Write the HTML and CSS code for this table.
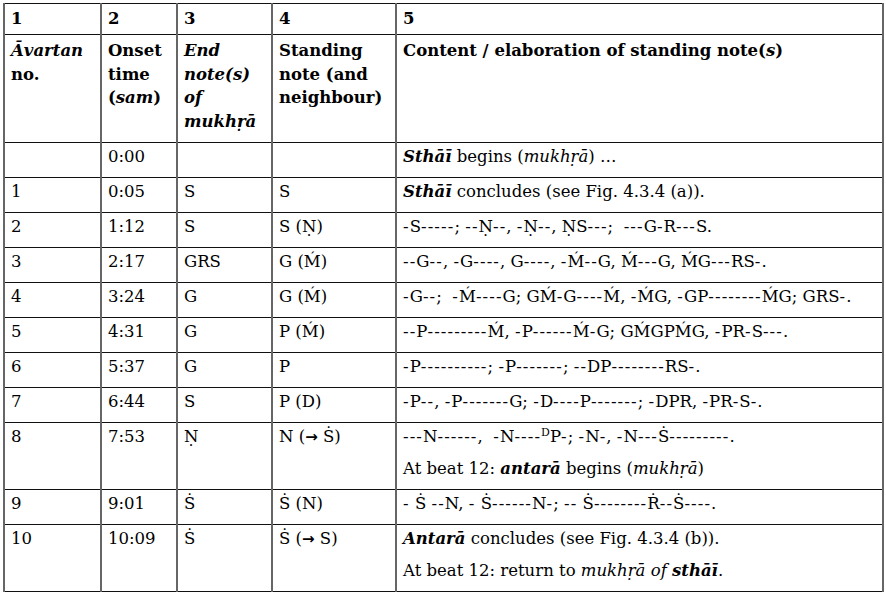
FILE: index.html
```html
<!DOCTYPE html>
<html lang="en">
<head>
<meta charset="utf-8">
<title>Ālāp table</title>
<link rel="stylesheet" href="styles.css">
</head>
<body>
<table class="grid">
  <colgroup>
    <col class="c1"><col class="c2"><col class="c3"><col class="c4"><col class="c5">
  </colgroup>
  <thead>
    <tr class="num">
      <th>1</th><th>2</th><th>3</th><th>4</th><th>5</th>
    </tr>
    <tr class="head">
      <th><i>Āvartan</i><br>no.</th>
      <th>Onset<br>time<br>(<i>sam</i>)</th>
      <th><i>End<br>note(s)<br>of<br>mukhṛā</i></th>
      <th>Standing<br>note (and<br>neighbour)</th>
      <th>Content / elaboration of standing note(<i>s</i>)</th>
    </tr>
  </thead>
  <tbody>
    <tr><td></td><td><p>0:00</p></td><td></td><td></td><td><p><b><i>Sthāī</i></b> begins (<i>mukhṛā</i>) …</p></td></tr>
    <tr><td><p>1</p></td><td><p>0:05</p></td><td><p>S</p></td><td><p>S</p></td><td><p><b><i>Sthāī</i></b> concludes (see Fig. 4.3.4 (a)).</p></td></tr>
    <tr><td><p>2</p></td><td><p>1:12</p></td><td><p>S</p></td><td><p>S (Ṇ)</p></td><td><p class="notes"><span class="d">-</span>S<span class="d">-----</span>; <span class="d">--</span>Ṇ<span class="d">--</span>, <span class="d">-</span>Ṇ<span class="d">--</span>, ṆS<span class="d">---</span>;&nbsp; <span class="d">---</span>G<span class="d">-</span>R<span class="d">---</span>S.</p></td></tr>
    <tr><td><p>3</p></td><td><p>2:17</p></td><td><p>GRS</p></td><td><p>G (Ḿ)</p></td><td><p class="notes"><span class="d">--</span>G<span class="d">--</span>, <span class="d">-</span>G<span class="d">----</span>, G<span class="d">----</span>, <span class="d">-</span>Ḿ<span class="d">--</span>G, Ḿ<span class="d">---</span>G, ḾG<span class="d">---</span>RS<span class="d">-</span>.</p></td></tr>
    <tr><td><p>4</p></td><td><p>3:24</p></td><td><p>G</p></td><td><p>G (Ḿ)</p></td><td><p class="notes"><span class="d">-</span>G<span class="d">--</span>;&nbsp; <span class="d">-</span>Ḿ<span class="d">----</span>G; GḾ<span class="d">-</span>G<span class="d">----</span>Ḿ, <span class="d">-</span>ḾG, <span class="d">-</span>GP<span class="d">--------</span>ḾG; GRS<span class="d">-</span>.</p></td></tr>
    <tr><td><p>5</p></td><td><p>4:31</p></td><td><p>G</p></td><td><p>P (Ḿ)</p></td><td><p class="notes"><span class="d">--</span>P<span class="d">---------</span>Ḿ, <span class="d">-</span>P<span class="d">------</span>Ḿ<span class="d">-</span>G; GḾGPḾG, <span class="d">-</span>PR<span class="d">-</span>S<span class="d">---</span>.</p></td></tr>
    <tr><td><p>6</p></td><td><p>5:37</p></td><td><p>G</p></td><td><p>P</p></td><td><p class="notes"><span class="d">-</span>P<span class="d">----------</span>; <span class="d">-</span>P<span class="d">-------</span>; <span class="d">--</span>DP<span class="d">--------</span>RS<span class="d">-</span>.</p></td></tr>
    <tr><td><p>7</p></td><td><p>6:44</p></td><td><p>S</p></td><td><p>P (D)</p></td><td><p class="notes"><span class="d">-</span>P<span class="d">--</span>, <span class="d">-</span>P<span class="d">-------</span>G; <span class="d">-</span>D<span class="d">----</span>P<span class="d">-------</span>; <span class="d">-</span>DPR, <span class="d">-</span>PR<span class="d">-</span>S<span class="d">-</span>.</p></td></tr>
    <tr><td><p>8</p></td><td><p>7:53</p></td><td><p>Ṇ</p></td><td><p>N (<span class="arr">→</span> Ṡ)</p></td><td><p class="notes"><span class="d">---</span>N<span class="d">------</span>,&nbsp; <span class="d">-</span>N<span class="d">----</span><sup class="grace">D</sup>P<span class="d">-</span>; <span class="d">-</span>N<span class="d">-</span>, <span class="d">-</span>N<span class="d">---</span>Ṡ<span class="d">---------</span>.</p><p>At beat 12: <b><i>antarā</i></b> begins (<i>mukhṛā</i>)</p></td></tr>
    <tr><td><p>9</p></td><td><p>9:01</p></td><td><p>Ṡ</p></td><td><p>Ṡ (N)</p></td><td><p class="notes"><span class="d">-</span> Ṡ <span class="d">--</span>N, <span class="d">-</span> Ṡ<span class="d">------</span>N<span class="d">-</span>; <span class="d">--</span> Ṡ<span class="d">--------</span>Ṙ<span class="d">--</span>Ṡ<span class="d">----</span>.</p></td></tr>
    <tr><td><p>10</p></td><td><p>10:09</p></td><td><p>Ṡ</p></td><td><p>Ṡ (<span class="arr">→</span> S)</p></td><td><p><b><i>Antarā</i></b> concludes (see Fig. 4.3.4 (b)).</p><p>At beat 12: return to <i>mukhṛā of</i> <b><i>sthāī</i></b>.</p></td></tr>
  </tbody>
</table>
</body>
</html>
```
FILE: styles.css
```css
html, body {
  margin: 0;
  background: #ffffff;
}
body {
  padding: 3px 0 0 3px;
  font-family: "DejaVu Serif", serif;
  font-size: 16.5px;
  color: #000;
}
.grid {
  border-collapse: collapse;
  table-layout: fixed;
  width: 879px;
}
.c1 { width: 97px; }
.c2 { width: 76px; }
.c3 { width: 95px; }
.c4 { width: 124px; }
.c5 { width: 487px; }

.grid th, .grid td {
  border-top: 1px solid #111;
  border-bottom: 1px solid #111;
  border-left: 2px solid #666;
  border-right: 2px solid #666;
  text-align: left;
  vertical-align: top;
  padding: 2px 4px 0 6px;
  line-height: 23.5px;
}
.grid th {
  font-weight: bold;
}
.num th {
  padding-top: 3px;
  padding-bottom: 3px;
  height: 24px;
}
.head th {
  padding-top: 4px;
  padding-bottom: 9px;
}
.grid p {
  margin: 0 0 8.5px;
}
.grid td {
  height: 32px;
}
.d {
  letter-spacing: 1.1px;
}
.arr {
  font-family: "DejaVu Sans", sans-serif;
  font-weight: bold;
  font-size: 15px;
}
.grace {
  font-size: 11px;
  vertical-align: 6px;
  line-height: 0;
}
```
